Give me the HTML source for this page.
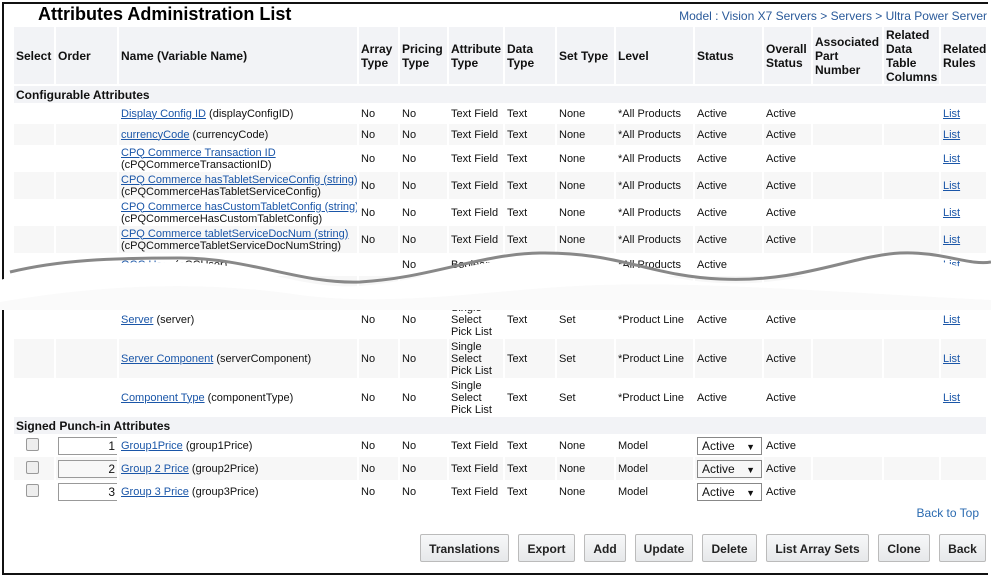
<!DOCTYPE html>
<html><head><meta charset="utf-8"><style>
body{margin:0;width:991px;height:575px;overflow:hidden;background:#fff;font-family:"Liberation Sans",Arial,sans-serif;font-size:11px;color:#111;position:relative}
.frame{position:absolute;left:2px;top:2px;width:984px;height:569px;border:2px solid #111;border-right:none;}
h1{position:absolute;left:38px;top:4px;margin:0;font-size:18px;font-weight:bold;color:#000}
.bc{position:absolute;right:4px;top:9px;font-size:12px;color:#2a5a9a}
table{position:absolute;left:14px;top:27px;border-collapse:collapse;table-layout:fixed;width:973px}
td,th{padding:0 0 0 2px;vertical-align:middle;border-right:2px solid #fff;overflow:hidden;white-space:nowrap;line-height:12px}
th{background:#f2f3f6;font-weight:bold;font-size:12px;text-align:left;height:57px;line-height:14px;white-space:normal;border-bottom:2px solid #fff}
tr.sec td{background:#f2f3f6;font-weight:bold;font-size:12px;height:17px}
tr.g td{background:#f7f7f7}
a{color:#1a56a8;text-decoration:underline}
.in{display:inline-block;height:18px;border:1px solid #999;text-align:right;font-size:12px;line-height:17px;padding-right:2px;box-sizing:border-box;width:60px;vertical-align:middle}
.cb{display:inline-block;width:11px;height:11px;border:1px solid #999;border-radius:2px;background:#eee;margin-left:10px}
.sel{display:inline-block;width:65px;height:18px;border:1px solid #888;box-sizing:border-box;font-size:12px;line-height:16px;padding-left:4px;position:relative}
.sel:after{content:"▼";position:absolute;right:6px;top:1px;font-size:9px}
.btn{position:absolute;top:534px;height:28px;border:1px solid #bbb;border-radius:2px;background:linear-gradient(#f7f8f9,#e6e8ea);font-weight:bold;font-size:12px;line-height:28px;text-align:center;color:#222;box-sizing:border-box}
</style></head><body>
<div class="frame"></div>
<h1>Attributes Administration List</h1>
<div class="bc">Model : Vision X7 Servers &gt; Servers &gt; Ultra Power Server</div>
<table>
<colgroup><col style="width:41px"><col style="width:63px"><col style="width:240px"><col style="width:41px"><col style="width:49px"><col style="width:56px"><col style="width:52px"><col style="width:59px"><col style="width:79px"><col style="width:69px"><col style="width:49px"><col style="width:71px"><col style="width:57px"><col style="width:47px"></colgroup>
<tr><th>Select</th><th>Order</th><th>Name (Variable Name)</th><th>Array Type</th><th>Pricing Type</th><th>Attribute Type</th><th>Data Type</th><th>Set Type</th><th>Level</th><th>Status</th><th>Overall Status</th><th>Associated Part Number</th><th>Related Data Table Columns</th><th>Related Rules</th></tr>
<tr class="sec"><td colspan="14">Configurable Attributes</td></tr>
<tr style="height:21px"><td></td><td></td><td><a>Display Config ID</a> (displayConfigID)</td><td>No</td><td>No</td><td>Text Field</td><td>Text</td><td>None</td><td>*All Products</td><td>Active</td><td>Active</td><td></td><td></td><td><a>List</a></td></tr>
<tr class="g" style="height:21px"><td></td><td></td><td><a>currencyCode</a> (currencyCode)</td><td>No</td><td>No</td><td>Text Field</td><td>Text</td><td>None</td><td>*All Products</td><td>Active</td><td>Active</td><td></td><td></td><td><a>List</a></td></tr>
<tr style="height:27px"><td></td><td></td><td><a>CPQ Commerce Transaction ID</a><br>(cPQCommerceTransactionID)</td><td>No</td><td>No</td><td>Text Field</td><td>Text</td><td>None</td><td>*All Products</td><td>Active</td><td>Active</td><td></td><td></td><td><a>List</a></td></tr>
<tr class="g" style="height:27px"><td></td><td></td><td><a>CPQ Commerce hasTabletServiceConfig (string)</a><br>(cPQCommerceHasTabletServiceConfig)</td><td>No</td><td>No</td><td>Text Field</td><td>Text</td><td>None</td><td>*All Products</td><td>Active</td><td>Active</td><td></td><td></td><td><a>List</a></td></tr>
<tr style="height:27px"><td></td><td></td><td><a>CPQ Commerce hasCustomTabletConfig (string)</a><br>(cPQCommerceHasCustomTabletConfig)</td><td>No</td><td>No</td><td>Text Field</td><td>Text</td><td>None</td><td>*All Products</td><td>Active</td><td>Active</td><td></td><td></td><td><a>List</a></td></tr>
<tr class="g" style="height:27px"><td></td><td></td><td><a>CPQ Commerce tabletServiceDocNum (string)</a><br>(cPQCommerceTabletServiceDocNumString)</td><td>No</td><td>No</td><td>Text Field</td><td>Text</td><td>None</td><td>*All Products</td><td>Active</td><td>Active</td><td></td><td></td><td><a>List</a></td></tr>
<tr style="height:23px"><td></td><td></td><td><a>OCC User</a> (oCCUser)</td><td></td><td>No</td><td>Boolean</td><td></td><td></td><td>*All Products</td><td>Active</td><td></td><td></td><td></td><td><a>List</a></td></tr>
<tr class="g" style="height:24px"><td></td><td></td><td></td><td></td><td></td><td></td><td></td><td>Set</td><td></td><td></td><td>Active</td><td></td><td></td><td></td></tr>
<tr style="height:39px"><td></td><td></td><td><a>Server</a> (server)</td><td>No</td><td>No</td><td style="white-space:normal">Single Select Pick List</td><td>Text</td><td>Set</td><td>*Product Line</td><td>Active</td><td>Active</td><td></td><td></td><td><a>List</a></td></tr>
<tr class="g" style="height:39px"><td></td><td></td><td><a>Server Component</a> (serverComponent)</td><td>No</td><td>No</td><td style="white-space:normal">Single Select Pick List</td><td>Text</td><td>Set</td><td>*Product Line</td><td>Active</td><td>Active</td><td></td><td></td><td><a>List</a></td></tr>
<tr style="height:39px"><td></td><td></td><td><a>Component Type</a> (componentType)</td><td>No</td><td>No</td><td style="white-space:normal">Single Select Pick List</td><td>Text</td><td>Set</td><td>*Product Line</td><td>Active</td><td>Active</td><td></td><td></td><td><a>List</a></td></tr>
<tr class="sec"><td colspan="14">Signed Punch-in Attributes</td></tr>
<tr style="height:23px"><td><span class="cb"></span></td><td><span class="in">1</span></td><td><a>Group1Price</a> (group1Price)</td><td>No</td><td>No</td><td>Text Field</td><td>Text</td><td>None</td><td>Model</td><td><span class="sel">Active</span></td><td>Active</td><td></td><td></td><td></td></tr>
<tr class="g" style="height:23px"><td><span class="cb"></span></td><td><span class="in">2</span></td><td><a>Group 2 Price</a> (group2Price)</td><td>No</td><td>No</td><td>Text Field</td><td>Text</td><td>None</td><td>Model</td><td><span class="sel">Active</span></td><td>Active</td><td></td><td></td><td></td></tr>
<tr style="height:23px"><td><span class="cb"></span></td><td><span class="in">3</span></td><td><a>Group 3 Price</a> (group3Price)</td><td>No</td><td>No</td><td>Text Field</td><td>Text</td><td>None</td><td>Model</td><td><span class="sel">Active</span></td><td>Active</td><td></td><td></td><td></td></tr>
</table>
<svg style="position:absolute;left:0;top:240px" width="991" height="70">
<path d="M0 40 C60 24 110 22 180 22 C250 22 300 50 360 46 C430 40 480 18 540 17 C620 16 650 40 720 43 C800 47 850 20 900 17 C940 15 970 35 991 30 L991 70 L0 70 Z" fill="#fff"/>
<path d="M10 32 C60 20 110 18 180 18 C250 18 300 44 360 42 C430 38 480 14 540 13 C620 12 650 36 720 39 C800 43 850 16 900 13 C940 11 970 26 991 22" fill="none" stroke="#888" stroke-width="3"/>
<path d="M0 62 C100 45 200 40 300 55 C400 68 500 48 600 45 C700 42 800 50 991 60 L991 70 L0 70Z" fill="#fafafa"/>
</svg>
<div style="position:absolute;right:12px;top:506px;font-size:12px;color:#2a6ab0">Back to Top</div>
<div class="btn" style="left:420px;width:89px">Translations</div>
<div class="btn" style="left:518px;width:57px">Export</div>
<div class="btn" style="left:584px;width:42px">Add</div>
<div class="btn" style="left:635px;width:58px">Update</div>
<div class="btn" style="left:702px;width:55px">Delete</div>
<div class="btn" style="left:766px;width:103px">List Array Sets</div>
<div class="btn" style="left:878px;width:52px">Clone</div>
<div class="btn" style="left:939px;width:47px">Back</div>
</body></html>
